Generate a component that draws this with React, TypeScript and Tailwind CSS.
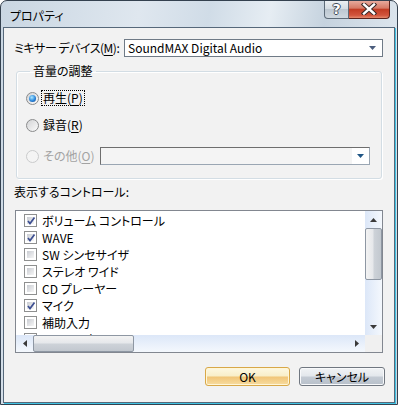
import React from "react";

const font = "font-['Noto_Sans_CJK_JP','Noto_Sans',sans-serif] [font-feature-settings:'palt']";

const Radio = ({ checked, disabled }: { checked?: boolean; disabled?: boolean }) => (
  <span
    className={`w-[13px] h-[13px] shrink-0 rounded-full border flex items-center justify-center ${
      disabled
        ? "border-[#cacbcc] bg-[#f4f4f4]"
        : "border-[#8a8b8c] bg-[linear-gradient(135deg,#d2d3d5,#fbfbfb)]"
    }`}
  >
    {checked && (
      <span className="w-[7px] h-[7px] rounded-full bg-[radial-gradient(circle_at_40%_35%,#aeeaff,#2a86dc_55%,#0d3d82)]" />
    )}
  </span>
);

const Check = ({ checked }: { checked?: boolean }) => (
  <span className="relative w-[13px] h-[13px] shrink-0 border border-[#8e8f8f] bg-white p-[2px] flex">
    <span className="flex-1 bg-[linear-gradient(135deg,#c9ccd2,#f6f6f6)]" />
    {checked && (
      <svg className="absolute left-[1px] top-[1px]" width="10" height="10" viewBox="0 0 10 10">
        <path d="M2 5 L4 7.5 L8.5 1.5" stroke="#3d4f92" strokeWidth="1.7" fill="none" />
      </svg>
    )}
  </span>
);

const Arrow = ({ dir, color = "#3a3a3a" }: { dir: "up" | "down" | "left" | "right"; color?: string }) => {
  const d = {
    up: "M0 4 L3.5 0 L7 4 Z",
    down: "M0 0 L7 0 L3.5 4 Z",
    left: "M4 0 L4 7 L0 3.5 Z",
    right: "M0 0 L4 3.5 L0 7 Z",
  }[dir];
  const vertical = dir === "up" || dir === "down";
  return (
    <svg width={vertical ? 7 : 4} height={vertical ? 4 : 7} viewBox={vertical ? "0 0 7 4" : "0 0 4 7"}>
      <path d={d} fill={color} />
    </svg>
  );
};

const items: [string, boolean][] = [
  ["ボリューム コントロール", true],
  ["WAVE", true],
  ["SW シンセサイザ", false],
  ["ステレオ ワイド", false],
  ["CD プレーヤー", false],
  ["マイク", true],
  ["補助入力", false],
  ["ライン入力", false],
];

export default function App() {
  return (
    <div
      className={`${font} w-[398px] h-[405px] flex flex-col border border-[#34414f] rounded-t-[7px] overflow-hidden text-[12px] leading-[14px] text-black whitespace-nowrap bg-[linear-gradient(100deg,#c9d6e2_0%,#dfe7ef_30%,#d0dce7_45%,#e6edf3_58%,#c6d3df_70%,#dbe4ec_85%,#c7d4e0_100%)]`}
    >
      {/* title bar */}
      <div className="h-[26px] flex items-start shrink-0">
        <span className="pl-[9px] pt-[8px]">プロパティ</span>
        <div className="ml-auto mr-[7px] -mt-[1px] flex">
          <div className="w-[25px] h-[19px] border border-t-0 border-[#5d6b79] rounded-bl-[4px] bg-[linear-gradient(#eef2f5,#d4dce3_48%,#bcc7d1_52%,#cfd8e0)] flex items-center justify-center">
            <span className="text-[14px] leading-[14px] font-bold text-white font-['DejaVu_Sans',sans-serif] [text-shadow:1px_0_#3f4a56,-1px_0_#3f4a56,0_1px_#3f4a56,0_-1px_#3f4a56]">
              ?
            </span>
          </div>
          <div className="w-[41px] h-[19px] border border-t-0 border-l-0 border-[#5c231c] rounded-br-[4px] bg-[linear-gradient(#eab0a3,#d67a66_45%,#c23c24_52%,#d2553d_85%,#e58a6e)] flex items-center justify-center">
            <svg width="16" height="12" viewBox="0 0 16 12">
              <path d="M3 1.5 L13 10.5 M13 1.5 L3 10.5" stroke="#3b2a28" strokeWidth="4.4" strokeLinecap="square" />
              <path d="M3 1.5 L13 10.5 M13 1.5 L3 10.5" stroke="#ffffff" strokeWidth="2.4" strokeLinecap="square" />
            </svg>
          </div>
        </div>
      </div>

      {/* client area */}
      <div className="flex-1 mx-[2px] mb-[1px] bg-[#f2f2f2] border border-[#56687a] shadow-[1px_1px_0_#40c4e4] flex flex-col pl-[10px] pt-[11px]">
        {/* mixer device */}
        <div className="flex items-center h-[18px]">
          <span className="w-[110px] tracking-[-0.5px]">
            ミキサー デバイス(<span className="underline underline-offset-2">M</span>):
          </span>
          <div className="w-[259px] h-[18px] border border-[#6f7a86] bg-white flex items-center pl-[3px] pr-[6px]">
            <span className="flex-1">SoundMAX Digital Audio</span>
            <Arrow dir="down" color="#4b5d7d" />
          </div>
        </div>

        {/* volume group */}
        <fieldset className="mt-[6px] ml-[2px] w-[366px] border border-[#d3dde4] rounded-[3px] pl-[9px] pb-[13px] shadow-[inset_1px_1px_0_#ffffff,1px_1px_0_#ffffff]">
          <legend className="ml-[4px] px-[3px] leading-[16px]">音量の調整</legend>
          <div className="mt-[12px] flex items-center gap-[3px] h-[14px]">
            <Radio checked />
            <span className="outline outline-1 outline-dotted outline-black px-[1px]">
              再生(<span className="underline underline-offset-2">P</span>)
            </span>
          </div>
          <div className="mt-[13px] flex items-center gap-[4px] h-[14px]">
            <Radio />
            <span>
              録音(<span className="underline underline-offset-2">R</span>)
            </span>
          </div>
          <div className="mt-[15px] flex items-center h-[18px]">
            <Radio disabled />
            <span className="ml-[4px] w-[57px] text-[#a3a3a3]">
              その他(<span className="underline underline-offset-2">O</span>)
            </span>
            <div className="w-[270px] h-[18px] border border-[#6e6e6e] border-b-[#9aa6b3] border-r-[#9aa6b3] bg-[#f4f4f4] flex justify-end">
              <div className="w-[17px] bg-white flex items-center justify-center">
                <Arrow dir="down" color="#1f5585" />
              </div>
            </div>
          </div>
        </fieldset>

        {/* controls list */}
        <span className="mt-[6px]">表示するコントロール:</span>
        <div className="mt-[11px] ml-[1px] w-[368px] h-[143px] border border-[#828790] bg-white grid grid-cols-[1fr_17px] grid-rows-[1fr_17px]">
          <div className="overflow-hidden pt-[1px] pl-[8px]">
            {items.map(([label, on]) => (
              <div key={label} className="h-[17px] flex items-center gap-[5px]">
                <Check checked={on} />
                <span>{label}</span>
              </div>
            ))}
          </div>
          <div className="bg-[linear-gradient(90deg,#dce7f8,#f4f8fd)] flex flex-col items-center">
            <div className="h-[17px] flex items-center">
              <Arrow dir="up" />
            </div>
            <div className="w-[17px] h-[52px] rounded-[2px] border border-[#8e97a3] bg-[linear-gradient(90deg,#f3f3f3,#e6e8eb_45%,#cdd2d8_55%,#c2c8cf)]" />
            <div className="flex-1" />
            <div className="h-[17px] flex items-center">
              <Arrow dir="down" />
            </div>
          </div>
          <div className="bg-[linear-gradient(#dce7f8,#f4f8fd)] flex items-center">
            <div className="w-[17px] flex justify-center">
              <Arrow dir="left" />
            </div>
            <div className="w-[101px] h-[17px] rounded-[2px] border border-[#8e97a3] bg-[linear-gradient(#f3f3f3,#e6e8eb_45%,#cdd2d8_55%,#c2c8cf)]" />
            <div className="flex-1" />
            <div className="w-[17px] flex justify-center">
              <Arrow dir="right" />
            </div>
          </div>
          <div className="bg-[#f0f0f0]" />
        </div>

        {/* buttons */}
        <div className="mt-[14px] flex justify-end gap-[9px] pr-[9px]">
          <button className="w-[85px] h-[19px] rounded-[3px] border border-[#d8a848] bg-[linear-gradient(#fdf8e2,#f8eec8_48%,#f1c577_52%,#f7dca0)] flex items-center justify-center shadow-[inset_0_0_0_1px_#fff6d8]">
            OK
          </button>
          <button className="w-[86px] h-[19px] rounded-[3px] border border-[#707780] bg-[linear-gradient(#f1f3f5,#e3e7ec_48%,#c4cbd4_52%,#b8c0ca)] flex items-center justify-center shadow-[inset_0_0_0_1px_#f8f9fb]">
            キャンセル
          </button>
        </div>
      </div>
    </div>
  );
}
